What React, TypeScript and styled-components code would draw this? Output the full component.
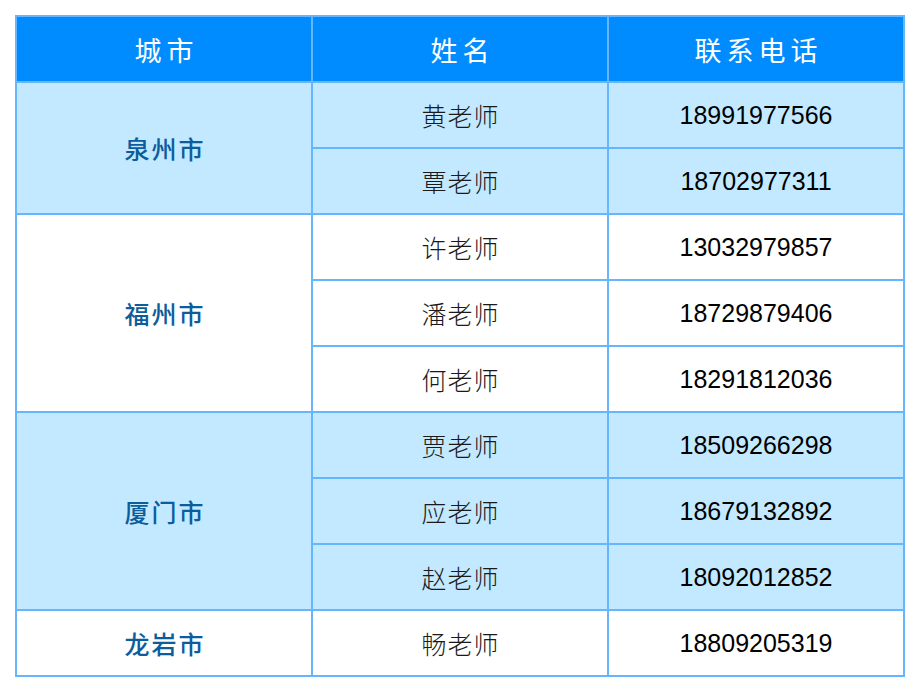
import React from 'react';
import styled, { createGlobalStyle } from 'styled-components';

const GlobalStyle = createGlobalStyle`
  html, body {
    margin: 0;
    padding: 0;
    background: #ffffff;
  }
`;

const Page = styled.div`
  padding: 15px;
`;

const Table = styled.table`
  border-collapse: separate;
  border-spacing: 0;
  width: 890px;
  table-layout: fixed;
  border-top: 2px solid #66b6ff;
  border-left: 2px solid #66b6ff;
`;

const HeadCell = styled.th`
  height: 64px;
  padding: 0 0 0 5px;
  background: #008cff;
  color: #ffffff;
  font-family: 'Noto Sans CJK SC', sans-serif;
  font-weight: 400;
  font-size: 27px;
  letter-spacing: 5px;
  text-align: center;
  border-right: 2px solid #66b6ff;
  border-bottom: 2px solid #66b6ff;
`;

const Row = styled.tr<{ $light: boolean }>`
  background: ${({ $light }) => ($light ? '#c2e9ff' : '#ffffff')};
`;

const Cell = styled.td`
  height: 64px;
  padding: 0;
  text-align: center;
  vertical-align: middle;
  border-right: 2px solid #66b6ff;
  border-bottom: 2px solid #66b6ff;
`;

const CityCell = styled(Cell)`
  padding-left: 2px;
  color: #0d5d9c;
  font-family: 'Noto Sans CJK SC', sans-serif;
  font-weight: 500;
  font-size: 25px;
  letter-spacing: 2px;
`;

const NameCell = styled(Cell)`
  padding-left: 1px;
  color: #1a1a1a;
  font-family: 'Noto Sans CJK SC', sans-serif;
  font-weight: 300;
  font-size: 25px;
  letter-spacing: 1px;
`;

const PhoneCell = styled(Cell)`
  color: #000000;
  font-family: 'Liberation Sans', Arial, sans-serif;
  font-size: 25px;
`;

type Group = { city: string; light: boolean; people: [string, string][] };

const GROUPS: Group[] = [
  {
    city: '泉州市',
    light: true,
    people: [
      ['黄老师', '18991977566'],
      ['覃老师', '18702977311'],
    ],
  },
  {
    city: '福州市',
    light: false,
    people: [
      ['许老师', '13032979857'],
      ['潘老师', '18729879406'],
      ['何老师', '18291812036'],
    ],
  },
  {
    city: '厦门市',
    light: true,
    people: [
      ['贾老师', '18509266298'],
      ['应老师', '18679132892'],
      ['赵老师', '18092012852'],
    ],
  },
  {
    city: '龙岩市',
    light: false,
    people: [['畅老师', '18809205319']],
  },
];

export default function App() {
  return (
    <Page>
      <GlobalStyle />
      <Table>
        <thead>
          <tr>
            <HeadCell>城市</HeadCell>
            <HeadCell>姓名</HeadCell>
            <HeadCell>联系电话</HeadCell>
          </tr>
        </thead>
        <tbody>
          {GROUPS.map((group) =>
            group.people.map(([name, phone], index) => (
              <Row key={`${group.city}-${name}`} $light={group.light}>
                {index === 0 && <CityCell rowSpan={group.people.length}>{group.city}</CityCell>}
                <NameCell>{name}</NameCell>
                <PhoneCell>{phone}</PhoneCell>
              </Row>
            ))
          )}
        </tbody>
      </Table>
    </Page>
  );
}
